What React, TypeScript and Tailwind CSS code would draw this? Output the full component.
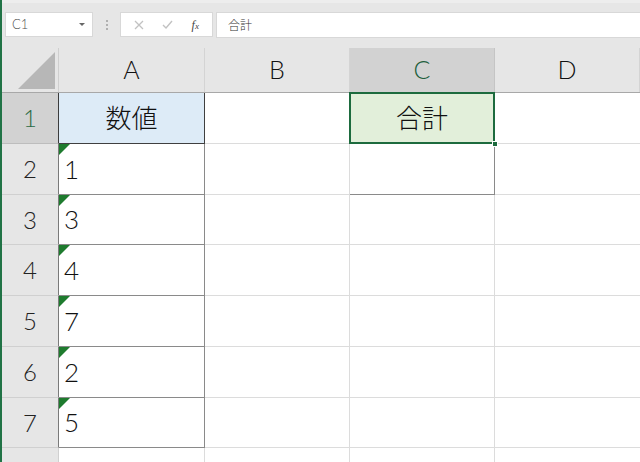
import React from 'react';

const cols = [
  { label: 'A', w: 'w-[146px]' },
  { label: 'B', w: 'w-[145px]' },
  { label: 'C', w: 'w-[145px]' },
  { label: 'D', w: 'w-[145px]' },
];

const rows = [
  { n: 1, h: 'h-[51px]', a: '数値' },
  { n: 2, h: 'h-[51px]', a: '1' },
  { n: 3, h: 'h-[50px]', a: '3' },
  { n: 4, h: 'h-[51px]', a: '4' },
  { n: 5, h: 'h-[51px]', a: '7' },
  { n: 6, h: 'h-[51px]', a: '2' },
  { n: 7, h: 'h-[50px]', a: '5' },
];

const font = { fontFamily: '"Lato", "Noto Sans CJK JP", sans-serif' };

const Triangle = () => (
  <div className="absolute left-0 top-0 w-0 h-0 border-t-[11px] border-t-[#1e7b2e] border-r-[11px] border-r-transparent" />
);

const FormulaBar = () => (
  <div className="h-[48px] bg-[#e6e6e6] border-t-[3px] border-t-[#ededed] pt-[9px] flex items-start">
    <div className="ml-[3px] w-[88px] h-[25px] bg-white border border-[#d8d8d8] flex items-center px-[6px] justify-between">
      <span className="text-[13px] text-[#505050]">C1</span>
      <svg width="8" height="5" viewBox="0 0 8 5"><path d="M1 1 L4 4 L7 1 Z" fill="#666" /></svg>
    </div>
    <div className="w-[27px] h-[25px] flex flex-col items-center justify-center gap-[2px]">
      <span className="w-[2px] h-[2px] bg-[#b0b0b0]" />
      <span className="w-[2px] h-[2px] bg-[#b0b0b0]" />
      <span className="w-[2px] h-[2px] bg-[#b0b0b0]" />
    </div>
    <div className="w-[93px] h-[25px] bg-white border border-[#d8d8d8] flex items-center justify-around px-[4px]">
      <svg width="10" height="10" viewBox="0 0 10 10"><path d="M1 1 L9 9 M9 1 L1 9" stroke="#c2c2c2" strokeWidth="1.3" /></svg>
      <svg width="11" height="9" viewBox="0 0 11 9"><path d="M1 5 L4 8 L10 1" stroke="#c2c2c2" strokeWidth="1.4" fill="none" /></svg>
      <span className="text-[12px] italic text-[#444]" style={{ fontFamily: '"Liberation Serif", serif' }}>f<span className="text-[9px]">x</span></span>
    </div>
    <div className="ml-[3px] flex-1 h-[26px] bg-white border-y border-l border-[#d8d8d8] flex items-center pl-[11px]">
      <span className="text-[12px] text-[#333]" style={{ fontFamily: '"Noto Sans CJK JP", sans-serif' }}>合計</span>
    </div>
  </div>
);

export default function App() {
  return (
    <div className="w-[640px] h-[462px] overflow-hidden flex bg-white font-light" style={font}>
      <div className="w-[2px] bg-[#217346] shrink-0" />
      <div className="flex-1 flex flex-col">
        <FormulaBar />
        {/* column headers */}
        <div className="flex h-[45px] bg-[#e6e6e6] border-b border-[#a8a8a8]">
          <div className="w-[57px] shrink-0 border-r border-[#cfcfcf] relative">
            <div className="absolute right-[3px] bottom-[3px] w-0 h-0 border-l-[37px] border-l-transparent border-b-[37px] border-b-[#b7b7b7]" />
          </div>
          {cols.map(c => (
            <div
              key={c.label}
              className={`${c.w} shrink-0 border-r flex items-center justify-center text-[25px] ${c.label === 'C' ? 'bg-[#d2d2d2] text-[#225f3c] border-[#c5c5c5]' : 'text-[#111] border-[#d4d4d4]'}`}
            >
              {c.label}
            </div>
          ))}
        </div>
        {rows.map(r => (
          <div key={r.n} className={`flex ${r.h}`}>
            <div className={`w-[57px] shrink-0 flex items-center justify-center text-[24px] border-b border-r ${r.n === 1 ? 'bg-[#d2d2d2] text-[#2a6a45] border-b-[#bdbdbd] border-r-[#3c3c3c]' : 'bg-[#e6e6e6] text-[#222] border-b-[#d0d0d0] border-r-[#7a7a7a]'}`}>
              {r.n}
            </div>
            <div className={`w-[146px] shrink-0 relative border-r border-b ${r.n === 1 ? 'bg-[#ddebf7] border-[#3f3f3f] justify-center' : 'bg-white border-[#8a8a8a] pl-[5px]'} flex items-center text-[26px] text-[#111]`}>
              {r.n > 1 && <Triangle />}
              {r.a}
            </div>
            <div className="w-[145px] shrink-0 border-r border-b border-[#dcdcdc]" />
            <div className={`w-[145px] shrink-0 relative border-r border-b flex items-center justify-center text-[26px] text-[#111] ${r.n === 1 ? 'bg-[#e2efda] border-[#1f6b3f]' : r.n === 2 ? 'border-[#8a8a8a]' : 'border-[#dcdcdc]'}`}>
              {r.n === 1 && (
                <>
                  <div className="absolute inset-[-1px] border-2 border-[#1d6b3e] pointer-events-none" />
                  <div className="absolute right-[-4px] bottom-[-4px] w-[6px] h-[6px] bg-[#1d6b3e] border border-white z-10" />
                  合計
                </>
              )}
            </div>
            <div className="flex-1 border-b border-[#dcdcdc]" />
          </div>
        ))}
        <div className="flex flex-1">
          <div className="w-[57px] shrink-0 bg-[#e6e6e6] border-r border-[#d0d0d0]" />
          <div className="w-[146px] shrink-0 border-r border-[#dcdcdc]" />
          <div className="w-[145px] shrink-0 border-r border-[#dcdcdc]" />
          <div className="w-[145px] shrink-0 border-r border-[#dcdcdc]" />
        </div>
      </div>
    </div>
  );
}
